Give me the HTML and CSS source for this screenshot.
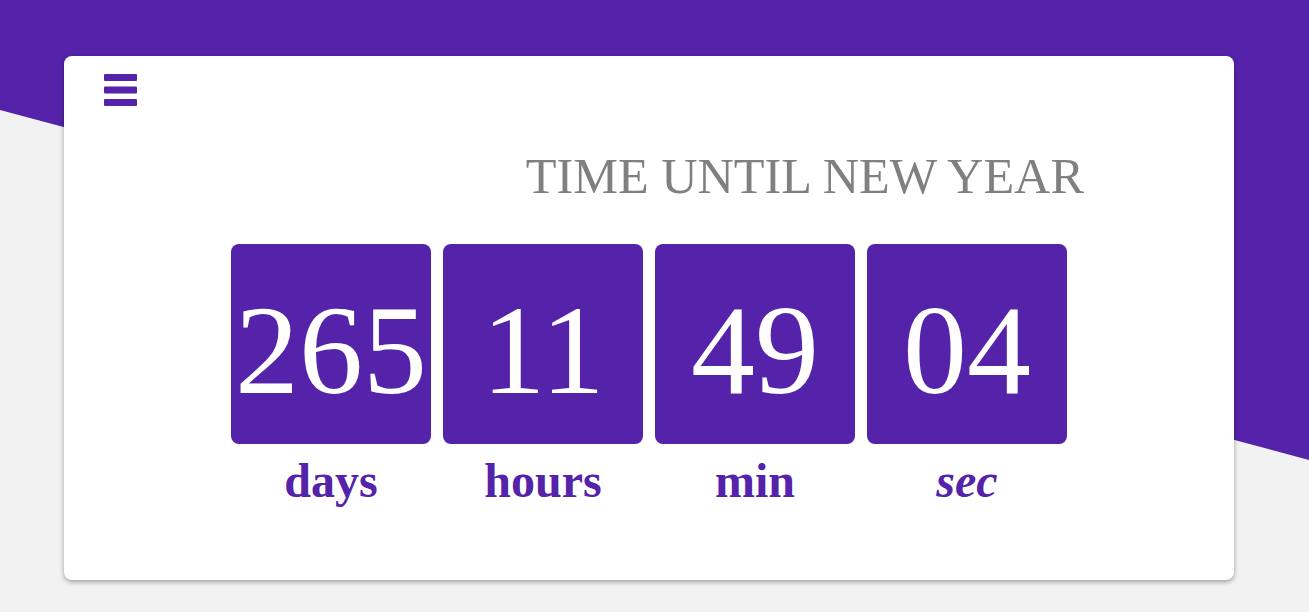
FILE: index.html
```html
<!DOCTYPE html>
<html>
<head>
<meta charset="utf-8">
<link rel="stylesheet" href="styles.css">
</head>
<body>
<div class="card">
  <div class="menu">
    <svg width="33" height="32" viewBox="0 0 33 32"><rect x="0" y="0" width="33" height="7" rx="1"/><rect x="0" y="12.5" width="33" height="7" rx="1"/><rect x="0" y="25" width="33" height="7" rx="1"/></svg>
  </div>
  <div class="title-row"><h1 class="title">TIME UNTIL NEW YEAR</h1></div>
  <div class="timer">
    <div class="unit"><div class="box">265</div><div class="label">days</div></div>
    <div class="unit"><div class="box">11</div><div class="label">hours</div></div>
    <div class="unit"><div class="box">49</div><div class="label">min</div></div>
    <div class="unit"><div class="box">04</div><div class="label italic">sec</div></div>
  </div>
</div>
</body>
</html>
```
FILE: styles.css
```css
html, body {
  margin: 0;
  padding: 0;
}
body {
  background: #f2f2f2;
  font-family: "Liberation Serif", "Times New Roman", serif;
  width: 1309px;
  height: 612px;
  overflow: hidden;
  position: relative;
  padding-top: 56px;
  box-sizing: border-box;
}
body::before {
  content: "";
  position: absolute;
  left: 0;
  top: 0;
  width: 100%;
  height: 100%;
  background: #5423a9;
  clip-path: polygon(0 0, 100% 0, 100% 460px, 0 110px);
  z-index: 0;
}
.card {
  position: relative;
  z-index: 1;
  margin-left: 64px;
  width: 1170px;
  height: 524px;
  box-sizing: border-box;
  background: #fff;
  border-radius: 8px;
  box-shadow: 0 2px 5px rgba(0, 0, 0, 0.35);
  padding: 18px 0 0 40px;
}
.menu {
  height: 32px;
}
.menu svg {
  display: block;
  fill: #5423a9;
}
.title-row {
  display: flex;
  justify-content: flex-end;
  padding-right: 150px;
  margin-top: 45px;
}
.title {
  margin: 0;
  font-weight: normal;
  font-size: 50.3px;
  line-height: 50px;
  color: #808080;
}
.timer {
  display: flex;
  justify-content: center;
  gap: 12px;
  margin-top: 43px;
  margin-left: -40px;
}
.unit {
  width: 200px;
  display: flex;
  flex-direction: column;
  align-items: center;
}
.box {
  width: 200px;
  height: 200px;
  box-sizing: border-box;
  padding-top: 42px;
  background: #5423a9;
  border-radius: 8px;
  color: #fff;
  font-size: 128px;
  line-height: 128px;
  text-align: center;
}
.label {
  margin-top: 13px;
  font-size: 48px;
  line-height: 48px;
  font-weight: bold;
  color: #5423a9;
}
.label.italic {
  font-style: italic;
}
```
